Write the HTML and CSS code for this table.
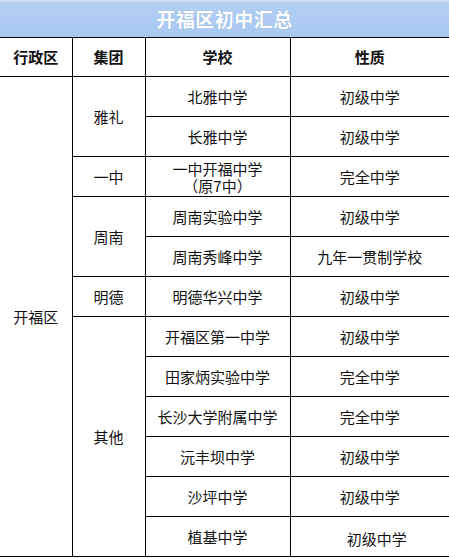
FILE: index.html
```html
<!DOCTYPE html>
<html lang="zh">
<head>
<meta charset="utf-8">
<link rel="stylesheet" href="styles.css">
</head>
<body>
<div class="title">开福区初中汇总</div>
<table class="summary">
  <colgroup>
    <col class="c1"><col class="c2"><col class="c3"><col class="c4">
  </colgroup>
  <tr class="head">
    <th>行政区</th><th>集团</th><th>学校</th><th>性质</th>
  </tr>
  <tr><td rowspan="12" class="first">开福区</td><td rowspan="2">雅礼</td><td>北雅中学</td><td>初级中学</td></tr>
  <tr><td>长雅中学</td><td>初级中学</td></tr>
  <tr><td>一中</td><td class="two">一中开福中学<br>（原7中）</td><td>完全中学</td></tr>
  <tr><td rowspan="2">周南</td><td>周南实验中学</td><td>初级中学</td></tr>
  <tr><td>周南秀峰中学</td><td>九年一贯制学校</td></tr>
  <tr><td>明德</td><td>明德华兴中学</td><td>初级中学</td></tr>
  <tr><td rowspan="6">其他</td><td>开福区第一中学</td><td>初级中学</td></tr>
  <tr><td>田家炳实验中学</td><td>完全中学</td></tr>
  <tr><td>长沙大学附属中学</td><td>完全中学</td></tr>
  <tr><td>沅丰坝中学</td><td>初级中学</td></tr>
  <tr><td>沙坪中学</td><td>初级中学</td></tr>
  <tr><td>植基中学</td><td class="shift">初级中学</td></tr>
</table>
</body>
</html>
```
FILE: styles.css
```css
html, body {
  margin: 0;
  padding: 0;
  background: #ffffff;
}
body {
  width: 449px;
  font-family: "Noto Sans CJK SC", "Noto Sans", sans-serif;
  color: #111;
}
.title {
  height: 37px;
  line-height: 37px;
  text-align: center;
  font-size: 19px;
  font-weight: bold;
  color: #ffffff;
  letter-spacing: 0.5px;
  background: linear-gradient(#d4e5f9 0px, #b2cff3 3px, #a9c9f1 100%);
  text-shadow: 0 0 1px #7f9fcc;
}
.summary {
  width: 449px;
  border-collapse: collapse;
  table-layout: fixed;
  font-size: 15px;
  line-height: 18px;
}
.c1 { width: 72px; }
.c2 { width: 73px; }
.c3 { width: 145px; }
.c4 { width: 159px; }
.summary th, .summary td {
  border: 1px solid #000;
  padding: 0;
  text-align: center;
  vertical-align: middle;
  height: 40px;
  box-sizing: border-box;
}
.summary tr > :last-child { border-right: none; }
.summary tr.head th {
  height: 39px;
  font-weight: bold;
  font-size: 15px;
}
.summary .first { border-left: none; }
.summary tr.head th:first-child { border-left: none; }
.summary td.two { line-height: 17px; padding-top: 1px; }
.summary td.shift { padding-left: 14px; padding-top: 4px; }
```
